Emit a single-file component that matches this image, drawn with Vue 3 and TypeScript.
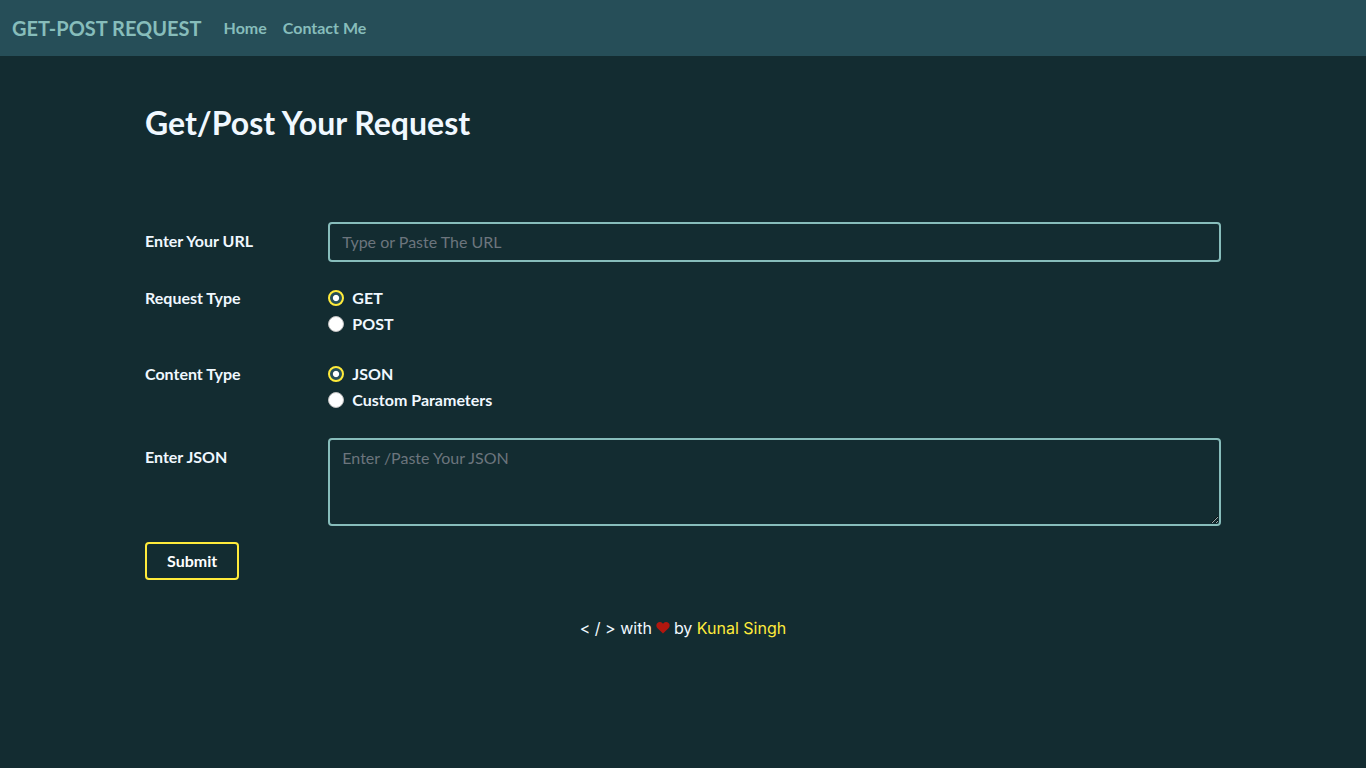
<script setup lang="ts">
import { ref } from 'vue'

const url = ref('')
const json = ref('')
const requestType = ref('GET')
const contentType = ref('JSON')

const links = ['Home', 'Contact Me']
const requestTypes = ['GET', 'POST']
const contentTypes = ['JSON', 'Custom Parameters']
</script>

<template>
  <div class="page">
    <nav class="navbar">
      <a class="brand" href="#">GET-POST REQUEST</a>
      <a v-for="link in links" :key="link" class="nav-link" href="#">{{ link }}</a>
    </nav>

    <main class="container">
      <h1>Get/Post Your Request</h1>
      <form @submit.prevent>
        <div class="row">
          <label class="label padded" for="url">Enter Your URL</label>
          <input id="url" v-model="url" class="control" type="text" placeholder="Type or Paste The URL" />
        </div>

        <fieldset class="row options">
          <legend>Request Type</legend>
          <div class="choices">
            <label v-for="type in requestTypes" :key="type" class="choice">
              <input v-model="requestType" type="radio" name="requestType" :value="type" />
              {{ type }}
            </label>
          </div>
        </fieldset>

        <fieldset class="row options">
          <legend>Content Type</legend>
          <div class="choices">
            <label v-for="type in contentTypes" :key="type" class="choice">
              <input v-model="contentType" type="radio" name="contentType" :value="type" />
              {{ type }}
            </label>
          </div>
        </fieldset>

        <div class="row">
          <label class="label padded" for="json">Enter JSON</label>
          <textarea id="json" v-model="json" class="control" rows="3" placeholder="Enter /Paste Your JSON"></textarea>
        </div>

        <button class="submit" type="submit">Submit</button>
      </form>
    </main>

    <footer class="footer">
      <span>&lt; / &gt; with</span>
      <svg class="heart" viewBox="0 0 16 14" role="img" aria-label="love">
        <path d="M8 13.5 1.6 7.2C-.3 5.300-.1 2.400 1.500 1.100 3.300-.4 6-.1 7.400 1.400L8 2l.6-.6C10-.1 12.700-.4 14.500 1.100c1.600 1.300 1.800 4.200-.1 6.100z" />
      </svg>
      <span>by <a href="#">Kunal Singh</a></span>
    </footer>
  </div>
</template>

<style>
body {
  margin: 0;
  background: #132c31;
}
</style>

<style scoped>
.page,
.page * {
  box-sizing: border-box;
}

.page {
  min-height: 100vh;
  background: #132c31;
  color: #f0f8ff;
  font: 700 16px/24px Lato, "Liberation Sans", sans-serif;
}

.navbar {
  display: flex;
  align-items: center;
  gap: 16px;
  height: 56px;
  padding: 0 12px;
  background: #264e58;
}

.navbar a {
  color: #87bdbb;
  text-decoration: none;
}

.brand {
  margin-right: 6px;
  font-size: 20px;
  line-height: 30px;
}

.container {
  max-width: 1140px;
  margin: 0 auto;
  padding: 48px 32px 0;
}

h1 {
  margin: 0 0 80px;
  font-size: 32px;
  line-height: 38px;
}

.row {
  display: grid;
  grid-template-columns: calc((100% + 24px) / 6 - 24px) minmax(0, 1fr);
  column-gap: 24px;
  align-items: start;
  margin-bottom: 16px;
}

.padded {
  padding-top: 7px;
}

.options {
  min-width: 0;
  margin: 0 0 24px;
  padding: 0;
  border: 0;
}

.options legend {
  float: left;
  padding: 0;
}

.row:first-child {
  margin-bottom: 24px;
}

.choices {
  grid-column: 2;
}

.choice {
  display: flex;
  align-items: center;
  gap: 8px;
  width: fit-content;
  margin-bottom: 2px;
}

.choice input {
  appearance: none;
  width: 16px;
  height: 16px;
  margin: 0;
  border: 1px solid #bfbfbf;
  border-radius: 50%;
  background: #fff;
}

.choice input:checked {
  border: 2px solid #ffeb3b;
  background: radial-gradient(circle closest-side, #fff 45%, #264e58 60%);
}

.control {
  display: block;
  width: 100%;
  min-height: 40px;
  margin: 0;
  padding: 6px 12px;
  border: 2px solid #87bdbb;
  border-radius: 4px;
  outline: 0;
  background: transparent;
  color: #f0f8ff;
  font: 400 16px/24px Lato, "Liberation Sans", sans-serif;
}

textarea.control {
  resize: vertical;
}

.control::placeholder {
  color: #6c757d;
  opacity: 1;
}

.submit {
  display: block;
  height: 38px;
  padding: 0 20px;
  border: 2px solid #ffeb3b;
  border-radius: 4px;
  background: transparent;
  color: #fff;
  font: inherit;
}

.footer {
  display: flex;
  align-items: center;
  justify-content: center;
  gap: 4px;
  margin-top: 36px;
  color: #f0f8ff;
  font: 400 16px/24px Inter, "Liberation Sans", sans-serif;
}

.footer a {
  color: #ffeb3b;
  text-decoration: none;
}

.heart {
  width: 14px;
  height: 12px;
  fill: #b2170f;
}
</style>
